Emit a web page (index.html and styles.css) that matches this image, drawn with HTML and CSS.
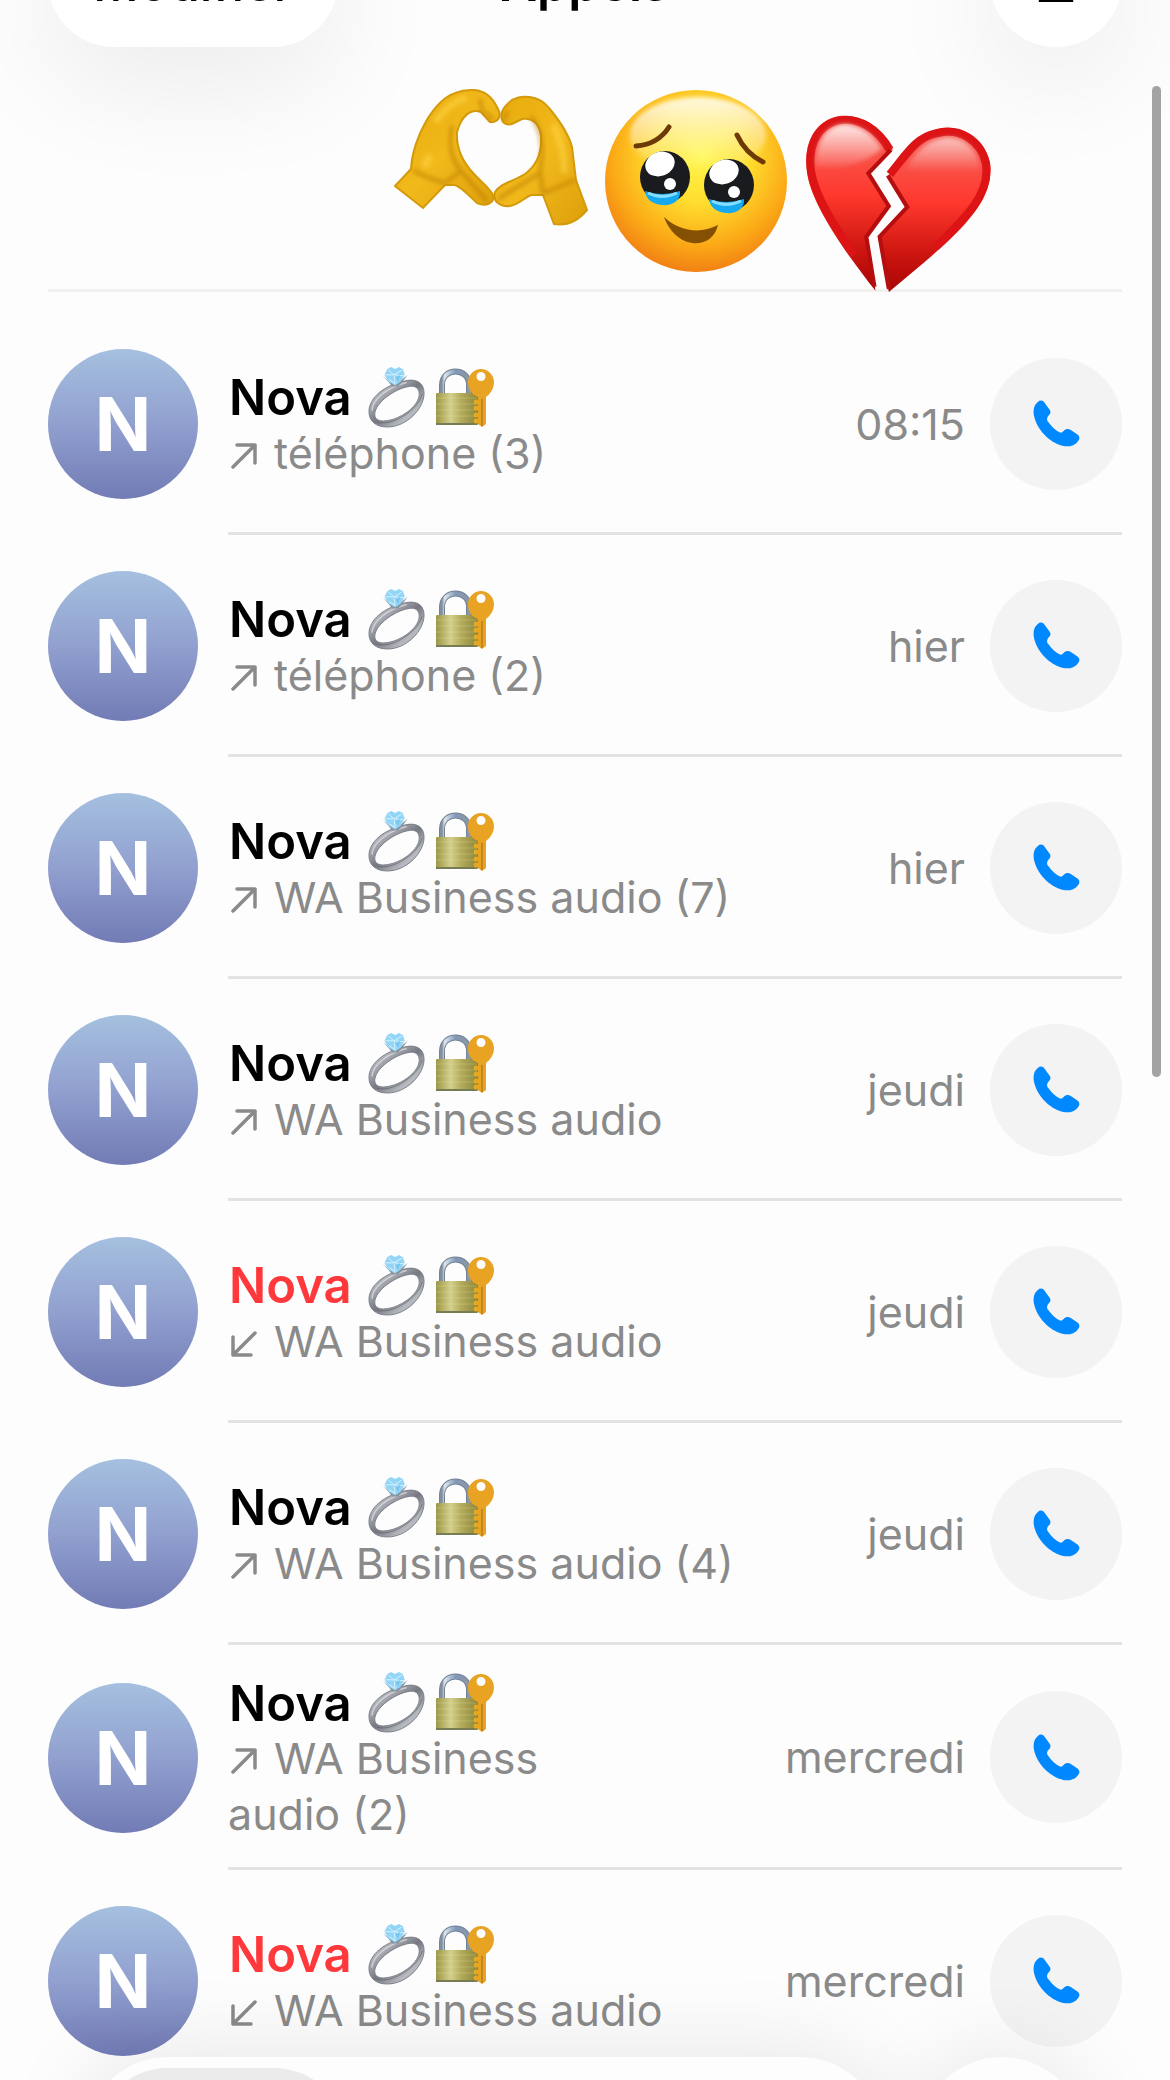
FILE: index.html
```html
<!DOCTYPE html>
<html lang="fr">
<head>
<meta charset="utf-8">
<meta name="viewport" content="width=device-width, initial-scale=1">
<title>Appels</title>
<link rel="stylesheet" href="styles.css">
</head>
<body>
<svg class="defs" aria-hidden="true">
  <defs>
    <linearGradient id="metal" x1="0" y1="0" x2="1" y2="1">
      <stop offset="0" stop-color="#5f626b"/><stop offset=".25" stop-color="#b0b2ba"/><stop offset=".5" stop-color="#757881"/><stop offset=".75" stop-color="#b9bbc2"/><stop offset="1" stop-color="#676a74"/>
    </linearGradient>
    <linearGradient id="brass" x1="0" y1="0" x2="1" y2="0">
      <stop offset="0" stop-color="#9c9646"/><stop offset=".35" stop-color="#d4cf8c"/><stop offset=".6" stop-color="#b3ab5c"/><stop offset="1" stop-color="#8c8437"/>
    </linearGradient>
    <linearGradient id="shackle" x1="0" y1="0" x2="1" y2="0">
      <stop offset="0" stop-color="#82909c"/><stop offset=".1" stop-color="#dfe6ec"/><stop offset=".5" stop-color="#8298b8"/><stop offset="1" stop-color="#8b97a4"/>
    </linearGradient>
    <symbol id="ring" viewBox="0 0 60 64">
      <path fill="url(#metal)" stroke="#7d8089" fill-rule="evenodd" d="M36 15C48 11 58 15 58 27C58 43 40 62 20 62C8 62 1 56 1 46C1 31 18 19 36 15ZM43 20C28 22 7 37 7 49C7 55 13 57 22 55C37 52 53 39 53 28C53 22 49 19 43 20Z"/>
      <path d="M4 45C5 33 20 21 40 16" fill="none" stroke="#e2e3e7" stroke-width="1.500" opacity=".7"/>
      <path d="M9 57C25 62 52 44 56 28" fill="none" stroke="#555861" stroke-width="1" opacity=".6"/>
      <path d="M15 9L21 15L25 20H31L36 15L41 8L35 13L20 13Z" fill="#87929c"/>
      <path d="M20 2L24 0L28 2L32 0L36 2L38 8L34 15L28 19L21 15L17 8Z" fill="#93d5f6"/>
      <path d="M21 3L27 8L35 3M18 8L27 8L37 9M27 8L28 17L22 13" fill="none" stroke="#d9f3fd" stroke-width="1"/>
      <path d="M24 4L29 11L34 7L31 15Z" fill="#62b9ed" opacity=".6"/>
    </symbol>
    <symbol id="lock" viewBox="0 0 60 60">
      <path d="M7 27V17C7 -1 34 -1 34 17V27" fill="none" stroke="#728297" stroke-width="6"/>
      <path d="M7 27V17C7 -1 34 -1 34 17V27" fill="none" stroke="url(#shackle)" stroke-width="4"/>
      <rect x="1" y="25" width="42" height="32" rx="1" fill="url(#brass)"/>
      <path d="M1 30H42M1 36H42M1 42H42M1 48H42" stroke="#efe9a7" stroke-width="1" opacity=".25"/>
      <path d="M1 55H42V57H1Z" fill="#777c55"/>
      <circle cx="41" cy="34" r="2.500" fill="#e2aa24"/><circle cx="41" cy="40" r="2.500" fill="#e2aa24"/><circle cx="41" cy="47" r="2.500" fill="#e2aa24"/><circle cx="41" cy="53" r="2.500" fill="#e2aa24"/>
      <path fill-rule="evenodd" fill="#e9a323" d="M46 1C53 1 59 7 59 14C59 21 55 26 51 29V56L47 59L43 56V29C36 26 33 21 33 14C33 7 39 1 46 1ZM46 4A4.500 4.500 0 1 0 46 13A4.500 4.500 0 1 0 46 4Z"/>
      <path d="M47 31V58" stroke="#b97b18" stroke-width="1.500"/>
    </symbol>
    <symbol id="phone" viewBox="0 0 48 48">
      <path fill="#0088ff" d="M5 2C7 0 10 0 12 3L17 10C19 13 17 15 15 17C14 19 14 21 16 23C19 27 23 31 27 33C29 34 30 33 32 31C34 29 36 29 39 31L45 35C48 37 48 40 46 42C42 47 37 48 31 47C16 43 4 30 1 16C0 10 1 5 5 2Z"/>
    </symbol>
    <symbol id="out" viewBox="0 0 26 26">
      <path d="M2 24L24 2M6 2H24V20" fill="none" stroke="currentColor" stroke-width="3.500" stroke-linecap="round" stroke-linejoin="round"/>
    </symbol>
    <symbol id="in" viewBox="0 0 26 26">
      <path d="M24 2L2 24M2 6V24H20" fill="none" stroke="currentColor" stroke-width="3.500" stroke-linecap="round" stroke-linejoin="round"/>
    </symbol>
  </defs>
</svg>

<header class="toolbar">
  <button class="pill edit" type="button">Modifier</button>
  <h1 class="title">Appels</h1>
  <button class="pill menu" type="button" aria-label="Filtrer"><svg class="menu-icon" viewBox="0 0 36 44" aria-hidden="true"><path d="M0 6H36M0 24H36M0 42H36" stroke="#000" stroke-width="4"/></svg></button>
</header>

<main class="calls">
  <div class="stickers">
    <svg class="hands" viewBox="0 0 194 138" role="img" aria-label="Mains en cœur">
      <defs>
        <linearGradient id="hand" x1="0" y1="0" x2="1" y2="1"><stop offset="0" stop-color="#e6aa0c"/><stop offset=".5" stop-color="#f2b91b"/><stop offset="1" stop-color="#dc9f0b"/></linearGradient>
        <filter id="soft" x="-20%" y="-20%" width="140%" height="140%"><feGaussianBlur stdDeviation="2"/></filter>
      </defs>
      <path fill="url(#hand)" stroke="#d39a0b" stroke-width="2" d="M1 97L17 80C18 61 24 46 34 29C45 12 56 2 76 1C91 0 99 9 104 20C108 27 104 34 96 33L87 23C76 19 67 28 63 43C62 58 68 72 79 84C86 92 95 98 99 106C101 114 92 118 83 114C75 107 69 99 61 96H51L29 119Z"/>
      <path fill="url(#hand)" stroke="#d39a0b" stroke-width="2" d="M109 33C105 26 109 18 118 11C129 5 146 7 155 19C165 31 174 43 178 58L182 91L193 121C184 132 173 137 160 135L149 106H137C130 109 124 116 116 117C106 118 98 112 101 103C107 94 120 92 131 85C143 76 148 62 147 47C145 33 137 29 128 30L120 34C116 36 112 36 109 33Z"/>
      <g fill="none" stroke="#b87803" stroke-width="4" opacity=".55" filter="url(#soft)">
        <path d="M86 10L88 21L99 31M58 36C54 57 58 72 67 82L51 94M67 82L93 112M19 81C30 88 41 91 51 94"/><path d="M137 27C151 45 149 66 146 82L149 105M113 22L110 32M150 104L181 91M104 110L146 84"/>
      </g>
      <path d="M41 33C53 18 61 11 73 9M159 36C168 53 171 68 170 84M30 78L36 66" stroke="#ffd746" stroke-width="7" fill="none" opacity=".55" filter="url(#soft)"/>
    </svg>
    <svg class="face" viewBox="0 0 184 184" role="img" aria-label="Visage ému">
      <defs>
        <radialGradient id="skin" cx=".53" cy=".36" r=".66"><stop offset="0" stop-color="#fff74a"/><stop offset=".4" stop-color="#ffdd2e"/><stop offset=".75" stop-color="#fba916"/><stop offset="1" stop-color="#f07c14"/></radialGradient>
        <linearGradient id="shine" x1="0" y1="0" x2="0" y2="1"><stop offset="0" stop-color="#fff" stop-opacity=".85"/><stop offset="1" stop-color="#fff" stop-opacity="0"/></linearGradient>
      </defs>
      <circle cx="92" cy="92" r="91" fill="url(#skin)"/>
      <ellipse cx="94" cy="46" rx="68" ry="38" fill="url(#shine)" filter="url(#soft)"/>
      <g transform="translate(2 0)">
        <path d="M30 57C44 56 56 49 63 38M131 46C137 59 145 67 157 73" fill="none" stroke="#6d3906" stroke-width="5" stroke-linecap="round"/>
        <g id="eye"><ellipse cx="59" cy="88" rx="25" ry="26" fill="#191b1e"/><ellipse cx="54" cy="75" rx="15" ry="12" transform="rotate(-20 54 75)" fill="#fff"/><circle cx="64" cy="95" r="6" fill="#fff"/><path d="M39 102C50 106 62 106 74 102C75 112 66 117 56 116C46 115 40 110 39 102Z" fill="#16a9ef"/><path d="M42 104Q56 111 71 104" stroke="#85ddff" stroke-width="3" fill="none"/></g>
        <use href="#eye" x="64" y="8"/>
        <path d="M58 128C74 143 95 145 112 136C106 162 70 161 58 128Z" fill="#845004"/>
      </g>
    </svg>
    <svg class="heart" viewBox="0 0 184 176" role="img" aria-label="Cœur brisé">
      <defs>
        <linearGradient id="red" x1="0" y1="0" x2="0" y2="1"><stop offset="0" stop-color="#f3685f"/><stop offset=".45" stop-color="#ff392e"/><stop offset=".75" stop-color="#cf1711"/><stop offset="1" stop-color="#a90405"/></linearGradient>
      </defs>
      <path d="M87 36C74 12 54 0 33 3C10 8 -1 30 3 58C7 91 44 141 70 174L61 121L83 91L63 59Z" fill="url(#red)"/>
      <path d="M84 36C72 15 53 4 35 7C14 11 3 31 7 58C11 82 30 111 49 139" fill="none" stroke="#dc1416" stroke-width="8"/>
      <path d="M85 36L63 59L83 91L61 121L69 170" fill="none" stroke="#b60d0e" stroke-width="4"/>
      <path d="M82 62C94 47 106 23 128 16C153 9 176 24 182 48C188 91 143 125 83 175L73 121L100 92Z" fill="url(#red)"/>
      <path d="M84 60C101 39 111 23 129 20C152 13 173 27 178 49C183 79 158 103 129 131" fill="none" stroke="#dc1416" stroke-width="8"/>
      <path d="M82 61L101 92L74 121L83 172" fill="none" stroke="#b60d0e" stroke-width="4"/>
      <g filter="url(#soft)"><path d="M11 52C12 22 25 12 40 11C58 12 70 24 76 35C58 52 28 56 11 52ZM100 54C114 31 125 26 139 24C158 23 170 36 173 56C151 58 126 60 100 54Z" fill="url(#shine)"/></g>
    </svg>
  </div>

  <ul class="list">
    <li class="call"><span class="avatar">N</span><div class="body"><div class="who"><h2 class="name">Nova <svg class="ring"><use href="#ring"/></svg><svg class="lock"><use href="#lock"/></svg></h2><p class="kind"><svg class="arrow"><use href="#out"/></svg>téléphone (3)</p></div><time class="when">08:15</time><button class="dial" type="button" aria-label="Appeler Nova"><svg class="phone"><use href="#phone"/></svg></button></div></li>
    <li class="call"><span class="avatar">N</span><div class="body"><div class="who"><h2 class="name">Nova <svg class="ring"><use href="#ring"/></svg><svg class="lock"><use href="#lock"/></svg></h2><p class="kind"><svg class="arrow"><use href="#out"/></svg>téléphone (2)</p></div><time class="when">hier</time><button class="dial" type="button" aria-label="Appeler Nova"><svg class="phone"><use href="#phone"/></svg></button></div></li>
    <li class="call"><span class="avatar">N</span><div class="body"><div class="who"><h2 class="name">Nova <svg class="ring"><use href="#ring"/></svg><svg class="lock"><use href="#lock"/></svg></h2><p class="kind"><svg class="arrow"><use href="#out"/></svg>WA Business audio (7)</p></div><time class="when">hier</time><button class="dial" type="button" aria-label="Appeler Nova"><svg class="phone"><use href="#phone"/></svg></button></div></li>
    <li class="call"><span class="avatar">N</span><div class="body"><div class="who"><h2 class="name">Nova <svg class="ring"><use href="#ring"/></svg><svg class="lock"><use href="#lock"/></svg></h2><p class="kind"><svg class="arrow"><use href="#out"/></svg>WA Business audio</p></div><time class="when">jeudi</time><button class="dial" type="button" aria-label="Appeler Nova"><svg class="phone"><use href="#phone"/></svg></button></div></li>
    <li class="call missed"><span class="avatar">N</span><div class="body"><div class="who"><h2 class="name">Nova <svg class="ring"><use href="#ring"/></svg><svg class="lock"><use href="#lock"/></svg></h2><p class="kind"><svg class="arrow"><use href="#in"/></svg>WA Business audio</p></div><time class="when">jeudi</time><button class="dial" type="button" aria-label="Appeler Nova"><svg class="phone"><use href="#phone"/></svg></button></div></li>
    <li class="call"><span class="avatar">N</span><div class="body"><div class="who"><h2 class="name">Nova <svg class="ring"><use href="#ring"/></svg><svg class="lock"><use href="#lock"/></svg></h2><p class="kind"><svg class="arrow"><use href="#out"/></svg>WA Business audio (4)</p></div><time class="when">jeudi</time><button class="dial" type="button" aria-label="Appeler Nova"><svg class="phone"><use href="#phone"/></svg></button></div></li>
    <li class="call"><span class="avatar">N</span><div class="body"><div class="who"><h2 class="name">Nova <svg class="ring"><use href="#ring"/></svg><svg class="lock"><use href="#lock"/></svg></h2><p class="kind"><svg class="arrow"><use href="#out"/></svg>WA Business audio&nbsp;(2)</p></div><time class="when">mercredi</time><button class="dial" type="button" aria-label="Appeler Nova"><svg class="phone"><use href="#phone"/></svg></button></div></li>
    <li class="call missed"><span class="avatar">N</span><div class="body"><div class="who"><h2 class="name">Nova <svg class="ring"><use href="#ring"/></svg><svg class="lock"><use href="#lock"/></svg></h2><p class="kind"><svg class="arrow"><use href="#in"/></svg>WA Business audio</p></div><time class="when">mercredi</time><button class="dial" type="button" aria-label="Appeler Nova"><svg class="phone"><use href="#phone"/></svg></button></div></li>
  </ul>
</main>

<div class="scrollbar" aria-hidden="true"></div>
<div class="tabbar" aria-hidden="true"><div class="tabs"><div class="tab-active"></div></div><div class="search"></div></div>
</body>
</html>
```
FILE: styles.css
```css
* { box-sizing: border-box; margin: 0; padding: 0; }
html { background: #fdfdfd; }
body {
  position: relative;
  height: 100vh;
  overflow: hidden;
  background: #fdfdfd;
  color: #000;
  font-family: Inter, "Liberation Sans", sans-serif;
}
button { border: 0; font: inherit; color: inherit; }
.defs { position: absolute; width: 0; height: 0; }

.toolbar {
  position: absolute;
  inset: -85px 48px auto 48px;
  display: grid;
  grid-template-columns: 1fr auto 1fr;
  align-items: center;
  height: 132px;
}
.pill {
  height: 132px;
  border-radius: 66px;
  background: #fff;
  box-shadow: 0 32px 120px rgba(0, 0, 0, .08);
}
.edit { justify-self: start; width: 290px; padding-top: 4px; font-size: 50px; font-weight: 500; }
.title { padding-top: 4px; font-size: 50px; font-weight: 600; }
.menu { justify-self: end; display: grid; place-items: center; width: 132px; }
.menu-icon { width: 36px; height: 42px; }

.calls { padding: 0 48px; }
.stickers {
  display: flex;
  align-items: flex-start;
  gap: 16px;
  height: 292px;
  padding: 89px 0 0 346px;
  border-bottom: 3px solid #f0f0f0;
}
.hands { width: 194px; height: 138px; }
.face { width: 184px; height: 184px; }
.heart { width: 188px; height: 180px; margin-top: 24px; }

.list { padding-top: 21px; list-style: none; }
.call { display: flex; align-items: center; gap: 30px; }
.avatar {
  display: grid;
  place-items: center;
  flex: none;
  width: 150px;
  height: 150px;
  border-radius: 50%;
  background: linear-gradient(#a5c0df, #91a0cf 50%, #727bb5);
  color: #fff;
  font-size: 74px;
  font-weight: 700;
}
.body {
  display: flex;
  align-items: center;
  flex: 1;
  min-height: 222px;
  padding: 27px 0 25px;
  border-bottom: 3px solid #e3e3e3;
}
.who { flex: 1; }
.name { display: flex; align-items: center; height: 58px; padding: 4px 0 0 1px; font-size: 49px; font-weight: 600; }
.ring { width: 58px; height: 64px; margin-left: 16px; }
.lock { width: 60px; height: 60px; margin-left: 9px; }
.kind { color: #8a8a8a; font-size: 43px; line-height: 56px; }
.arrow { width: 26px; height: 26px; margin: 0 17px 0 3px; }
.when { flex: none; margin: 0 25px 0 66px; color: #8a8a8a; font-size: 43px; }
.dial { display: grid; place-items: center; flex: none; width: 132px; height: 132px; border-radius: 50%; background: #f3f3f3; }
.phone { width: 47px; height: 47px; }
.missed .name { color: #ff383c; }

.scrollbar {
  position: absolute;
  top: 86px;
  right: 9px;
  width: 9px;
  height: 991px;
  border-radius: 5px;
  background: #a3a3a3;
}
.tabbar {
  position: absolute;
  inset: auto 84px -145px 84px;
  display: flex;
  justify-content: space-between;
}
.tabs, .search { height: 168px; border-radius: 84px; background: #fdfdfd; box-shadow: 0 0 90px rgba(0, 0, 0, .1); }
.tabs { width: 800px; padding: 11px; }
.tab-active { width: 252px; height: 146px; border-radius: 73px; background: #ebebeb; }
.search { width: 168px; }
```
